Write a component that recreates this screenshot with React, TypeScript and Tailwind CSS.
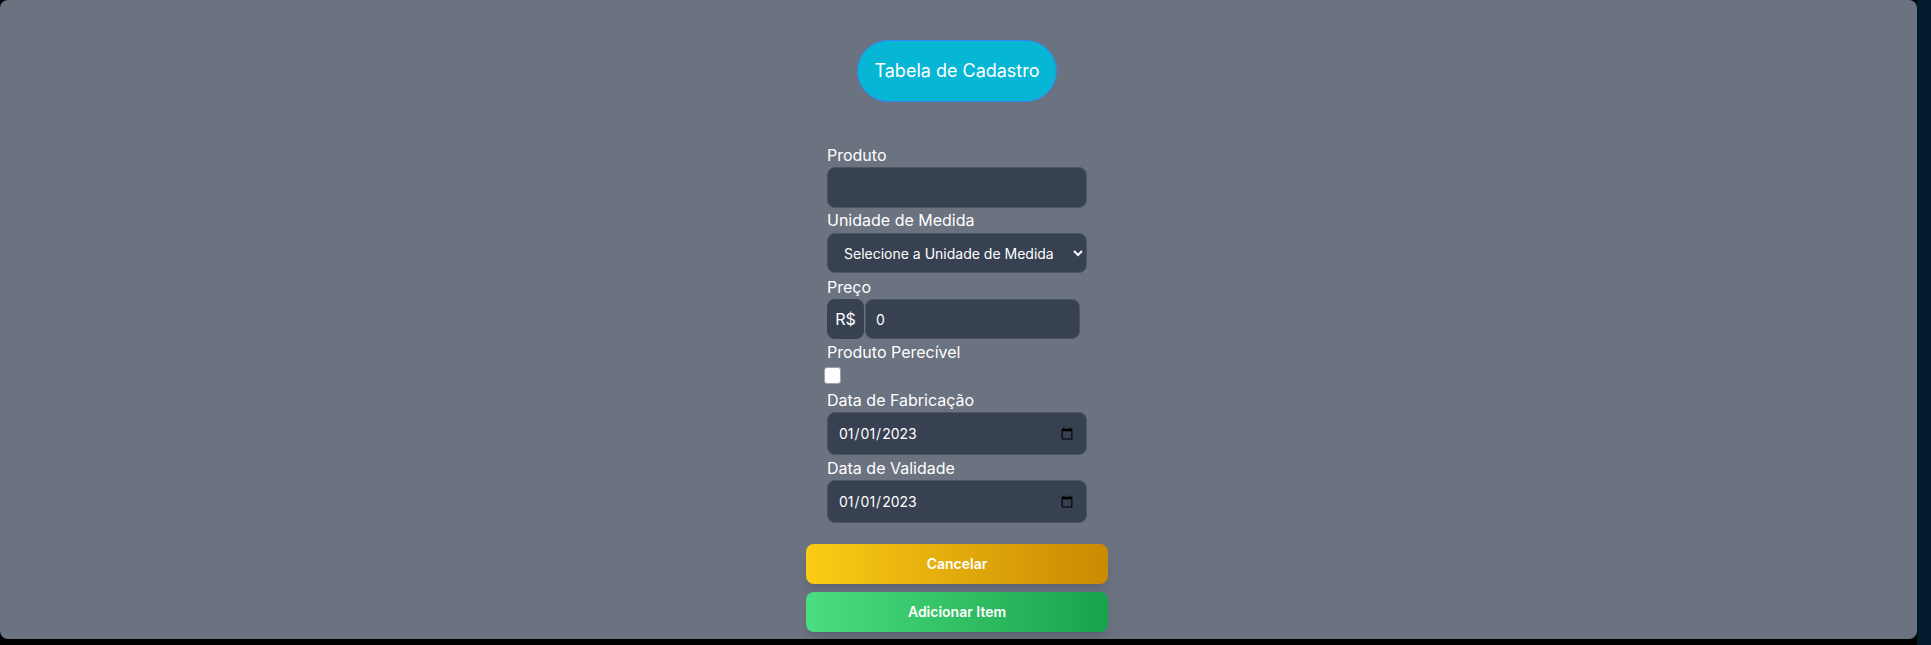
import {useState} from "react";

export default function App() {
    const [perecivel, setPerecivel] = useState(false);

    return <div className="flex w-full h-[645px] bg-black font-['Inter',sans-serif] text-white overflow-hidden">
        <main className="flex-1 h-[639px] bg-[#6b7280] rounded-lg flex flex-col items-center pt-10 pr-[3px]">
            <h1 className="px-4 py-4 text-lg leading-7 rounded-full bg-[#06b6d4] border border-[#3b82f6]">
                Tabela de Cadastro
            </h1>

            <form className="flex flex-col items-center mt-[41px]" onSubmit={e => e.preventDefault()}>
                <div className="flex flex-col w-[260px]">
                    <label className="text-base leading-6">Produto</label>
                    <input type="text"
                           className="h-[41px] px-3 rounded-lg bg-[#374151] border border-[#4b5563] text-sm outline-none"/>

                    <label className="text-base leading-6">Unidade de Medida</label>
                    <select defaultValue=""
                            className="h-10 mt-px px-3 rounded-lg bg-[#374151] border border-[#4b5563] text-sm outline-none">
                        <option value="">Selecione a Unidade de Medida</option>
                        <option value="kg">Quilograma</option>
                        <option value="l">Litro</option>
                        <option value="un">Unidade</option>
                    </select>

                    <label className="text-base leading-6 mt-0.5">Preço</label>
                    <div className="flex gap-px">
                        <span className="flex items-center justify-center w-[37px] h-10 rounded-lg bg-[#374151] text-base">
                            R$
                        </span>
                        <input type="number" defaultValue={0}
                               className="w-[215px] h-10 px-2.5 rounded-lg bg-[#374151] border border-[#4b5563] text-sm outline-none"/>
                    </div>

                    <label className="text-base leading-6 mt-px">Produto Perecível</label>
                    <input type="checkbox" checked={perecivel} onChange={e => setPerecivel(e.target.checked)}
                           className="appearance-none w-[17px] h-[17px] mt-[3px] -ml-[3px] rounded-[3px] bg-white border border-[#9ca3af] checked:bg-[#3b82f6]"/>

                    <label className="text-base leading-6 mt-1">Data de Fabricação</label>
                    <input type="date" defaultValue="2023-01-01"
                           className="h-[43px] px-2.5 rounded-lg bg-[#374151] border border-[#4b5563] text-sm outline-none"/>

                    <label className="text-base leading-6 mt-px">Data de Validade</label>
                    <input type="date" defaultValue="2023-01-01"
                           className="h-[43px] px-2.5 rounded-lg bg-[#374151] border border-[#4b5563] text-sm outline-none"/>
                </div>

                <div className="flex flex-col gap-2 w-[302px] mt-[21px]">
                    <button type="button"
                            className="h-10 rounded-lg bg-linear-to-r from-[#facc15] to-[#ca8a04] text-sm font-semibold shadow-lg">
                        Cancelar
                    </button>
                    <button type="submit"
                            className="h-10 rounded-lg bg-linear-to-r from-[#4ade80] to-[#16a34a] text-sm font-semibold shadow-lg">
                        Adicionar Item
                    </button>
                </div>
            </form>
        </main>
        <aside className="w-[14px] h-full bg-[#011a2d]"/>
    </div>
}
